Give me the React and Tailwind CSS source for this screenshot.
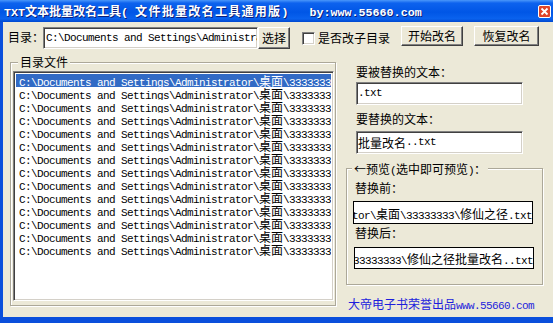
import React from 'react';

const CJK = /([\u2190-\u21ff\u3000-\u9fff\uff00-\uffef]+)/;

// 中英文混排：英文用等宽，中文用 CJK 字体
const Mixed = ({ text, monoClass, cjkClass }) => (
  <>
    {text
      .split(CJK)
      .filter(Boolean)
      .map((s, i) =>
        CJK.test(s) ? (
          <span key={i} className={cjkClass}>{s}</span>
        ) : (
          <span key={i} className={monoClass}>{s}</span>
        )
      )}
  </>
);

const mono = "font-['Liberation_Mono',monospace] text-[11px] tracking-[-0.6px]";
const cjk = "font-['Noto_Sans_CJK_SC',sans-serif] text-[12px] tracking-normal";
const titleMono = "font-['Liberation_Mono',monospace] text-[11.7px]";
const sunken =
  'border border-t-[#808080] border-l-[#808080] border-b-white border-r-white shadow-[inset_1px_1px_0_#404040,inset_-1px_-1px_0_#d4d0c8]';
const raised =
  'border border-t-white border-l-white border-b-[#404040] border-r-[#404040] shadow-[inset_-1px_-1px_0_#808080] bg-[#ece9d8]';
const etched = 'border border-[#aca899] shadow-[inset_1px_1px_0_white,1px_1px_0_white]';

const PATH = 'C:\\Documents and Settings\\Administrator\\桌面\\33333333\\修仙之径.txt';

export default function App() {
  const rows = Array.from({ length: 14 });

  return (
    <div className="w-[553px] h-[323px] overflow-hidden flex flex-col bg-[#0a4fdc] text-black">
      {/* 标题栏 */}
      <div className="h-[22px] shrink-0 flex items-center pl-[4px] bg-[linear-gradient(180deg,#4a97fa_0%,#0d62ee_14%,#0056e6_55%,#0a62ee_85%,#0048cf_100%)]">
        <div className="text-white font-bold whitespace-pre leading-[14px] [text-shadow:1px_1px_0_#0a1e7a]">
          <span className={titleMono}>TXT</span>
          <span className="font-['Noto_Sans_CJK_SC',sans-serif] text-[12px]">文本批量改名工具</span>
          <span className={titleMono}>( </span>
          <span className="font-['Noto_Sans_CJK_SC',sans-serif] text-[12px] tracking-[1.3px]">文件批量改名工具通用版</span>
          <span className={titleMono}>)   by:www.55660.com</span>
        </div>
        <div className="ml-auto mr-[2px] w-[13px] h-[13px] rounded-[2px] border border-white bg-[#e0452a] flex items-center justify-center">
          <svg width="9" height="9" viewBox="0 0 9 9">
            <path d="M1.5 1.5 L7.5 7.5 M7.5 1.5 L1.5 7.5" stroke="white" strokeWidth="1.8" />
          </svg>
        </div>
      </div>

      {/* 主体 */}
      <div className="flex-1 flex flex-col ml-[3px] mb-[6px] bg-[#ece9d8]">
        {/* 目录行 */}
        <div className="flex items-start mt-[4px] h-[23px] whitespace-nowrap">
          <span className={`ml-[5px] w-[35px] leading-[22px] ${cjk}`}>目录：</span>
          <div className={`mt-[1px] w-[215px] h-[22px] bg-white flex items-center overflow-hidden pl-[2px] ${sunken}`}>
            <span className={mono}>C:\Documents and Settings\Administrator</span>
          </div>
          <button className={`mt-[1px] w-[32px] h-[22px] ${raised} ${cjk}`}>选择</button>
          <span className={`ml-[12px] mt-[6px] w-[13px] h-[13px] bg-white ${sunken}`} />
          <span className={`ml-[3px] w-[83px] leading-[23px] ${cjk}`}>是否改子目录</span>
          <button className={`w-[62px] h-[20px] ${raised} ${cjk}`}>开始改名</button>
          <button className={`ml-[11px] w-[65px] h-[20px] ${raised} ${cjk}`}>恢复改名</button>
        </div>

        <div className="flex mt-[13px]">
          {/* 目录文件 */}
          <div className={`relative ml-[7px] w-[326px] h-[244px] pt-[8px] pl-[2px] ${etched}`}>
            <span className={`absolute left-[7px] -top-[8px] px-[2px] bg-[#ece9d8] leading-[14px] ${cjk}`}>目录文件</span>
            <div className={`w-[321px] h-[230px] bg-white overflow-hidden ${sunken} p-[2px]`}>
              {rows.map((_, i) => (
                <div
                  key={i}
                  className={`h-[13px] leading-[13px] pl-[3px] whitespace-nowrap overflow-hidden ${
                    i === 0 ? 'bg-[#316ac5] text-white' : ''
                  }`}
                >
                  <Mixed text={PATH} monoClass={mono} cjkClass={cjk} />
                </div>
              ))}
            </div>
          </div>

          {/* 右侧 */}
          <div className="ml-[10px] w-[197px] flex flex-col whitespace-nowrap">
            <span className={`ml-[10px] mt-[3px] leading-[14px] ${cjk}`}>要被替换的文本：</span>
            <div className={`ml-[10px] mt-[3px] w-[167px] h-[23px] bg-white flex items-center pl-[1px] ${sunken}`}>
              <span className={mono}>.txt</span>
            </div>
            <span className={`ml-[10px] mt-[7px] leading-[14px] ${cjk}`}>要替换的文本：</span>
            <div className={`ml-[10px] mt-[5px] w-[167px] h-[23px] bg-white flex items-center pl-[1px] ${sunken}`}>
              <Mixed text="批量改名..txt" monoClass={mono} cjkClass={cjk} />
            </div>

            {/* 预览 */}
            <div className={`relative mt-[14px] h-[117px] flex flex-col pt-[12px] ${etched}`}>
              <span className="absolute left-[5px] -top-[8px] px-[2px] bg-[#ece9d8] leading-[14px]">
                <Mixed text="←预览(选中即可预览)：" monoClass={mono} cjkClass={cjk} />
              </span>
              <span className={`ml-[8px] leading-[14px] ${cjk}`}>替换前：</span>
              <div className="ml-[6px] mt-[6px] w-[180px] h-[23px] border border-black bg-white flex items-center justify-end overflow-hidden">
                <span className="shrink-0">
                  <Mixed text={PATH} monoClass={mono} cjkClass={cjk} />
                </span>
              </div>
              <span className={`ml-[8px] mt-[2px] leading-[14px] ${cjk}`}>替换后：</span>
              <div className="ml-[7px] mt-[7px] w-[180px] h-[22px] border border-black bg-white flex items-center justify-end overflow-hidden">
                <span className="shrink-0">
                  <Mixed
                    text="C:\Documents and Settings\Administrator\桌面\33333333\修仙之径批量改名..txt"
                    monoClass={mono}
                    cjkClass={cjk}
                  />
                </span>
              </div>
            </div>

            <div className="ml-[2px] mt-[11px] leading-[14px] text-[#1e1edc]">
              <Mixed text="大帝电子书荣誉出品www.55660.com" monoClass={mono} cjkClass={cjk} />
            </div>
          </div>
        </div>
      </div>
    </div>
  );
}
